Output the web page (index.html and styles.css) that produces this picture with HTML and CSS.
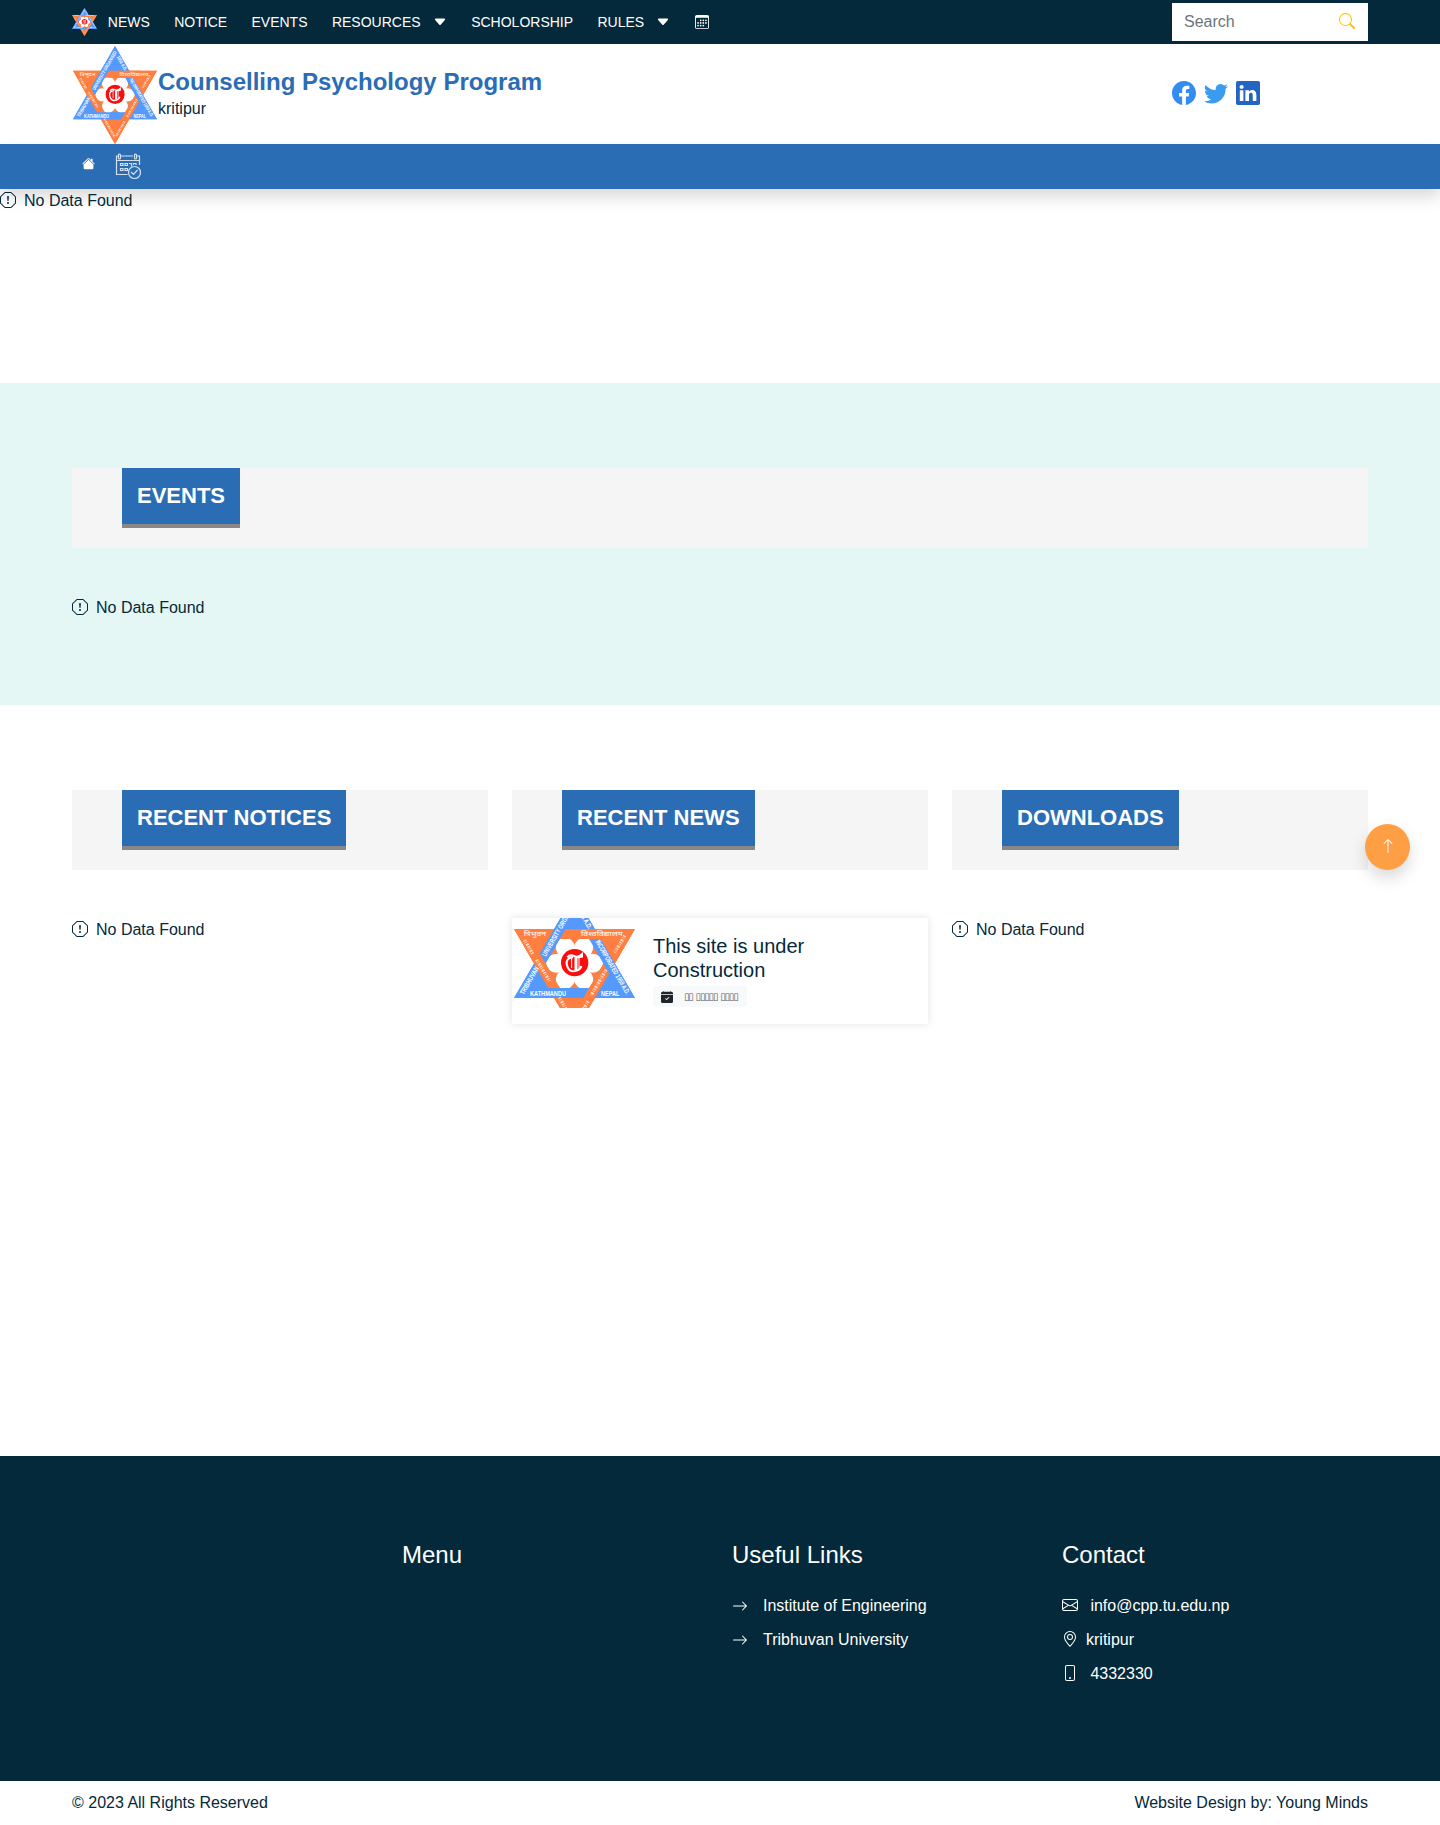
FILE: index.html
```html
<!DOCTYPE html>
<html lang="en">
<head>
<meta charset="utf-8">
<title>Counselling Psychology Program</title>
<link rel="stylesheet" href="styles.css">
</head>
<body>
<svg class="sprite" aria-hidden="true">
  <defs>
    <clipPath id="over">
      <rect x="195" y="95" width="100" height="55"/>
      <rect x="30" y="155" width="70" height="100"/>
      <rect x="195" y="270" width="80" height="55"/>
    </clipPath>
    <path id="edge-left" d="M29 303 L192 22"/>
    <path id="edge-right" d="M177 28 L344 316"/>
    <symbol id="logo" viewBox="0 0 363 417" preserveAspectRatio="none">
      <path d="M0 105H363L181.500 417Z" fill="#ff7f41"/>
      <path d="M181.500 0L363 312H0Z" fill="#5599fd"/>
      <path d="M138 135H225L268 208 225 282H138L95 208Z" fill="#ff7f41"/>
      <g fill="#fff">
        <ellipse cx="235" cy="208" rx="32" ry="28.500"/>
        <ellipse cx="235" cy="208" rx="32" ry="28.500" transform="rotate(60 181.500 208)"/>
        <ellipse cx="235" cy="208" rx="32" ry="28.500" transform="rotate(120 181.500 208)"/>
        <ellipse cx="235" cy="208" rx="32" ry="28.500" transform="rotate(180 181.500 208)"/>
        <ellipse cx="235" cy="208" rx="32" ry="28.500" transform="rotate(240 181.500 208)"/>
        <ellipse cx="235" cy="208" rx="32" ry="28.500" transform="rotate(300 181.500 208)"/>
        <circle cx="182" cy="207" r="50"/>
      </g>
      <path id="orange-band" fill="#ff7f41" fill-rule="evenodd" d="M0 105H363L181.500 417ZM52 135L181.500 357 311 135Z"/>
      <path fill="#5599fd" fill-rule="evenodd" d="M181.500 0L363 312H0ZM181.500 60L52 282H311Z"/>
      <use href="#orange-band" clip-path="url(#over)"/>
      <g class="logo-text">
        <text><textPath href="#edge-left" textLength="92" lengthAdjust="spacingAndGlyphs">TRIBHUVAN</textPath></text>
        <text><textPath href="#edge-left" startOffset="132" textLength="188" lengthAdjust="spacingAndGlyphs">UNIVERSITY ORGANISED</textPath></text>
        <text><textPath href="#edge-right" startOffset="22" textLength="70" lengthAdjust="spacingAndGlyphs">1958 A.D.</textPath></text>
        <text><textPath href="#edge-right" startOffset="133" textLength="185" lengthAdjust="spacingAndGlyphs">INCORPORATED 1959 A.D.</textPath></text>
        <text x="48" y="305" textLength="108" lengthAdjust="spacingAndGlyphs">KATHMANDU</text>
        <text x="261" y="305" textLength="55" lengthAdjust="spacingAndGlyphs">NEPAL</text>
      </g>
      <g class="logo-script">
        <text x="29" y="126" textLength="67" lengthAdjust="spacingAndGlyphs">त्रिभुवन</text>
        <text x="201" y="126" textLength="125" lengthAdjust="spacingAndGlyphs">विश्वविद्यालय</text>
      </g>
      <path fill="none" stroke="#fff" stroke-opacity=".7" stroke-width="10" stroke-dasharray="4 3 2 4 6 3" d="M32 138L57 182M68 197L107 262M136 310L180 388M332 125L302 176M276 227L232 304M222 322L186 384"/>
      <circle cx="182" cy="206" r="41" fill="#f90d0d"/>
      <g fill="none" stroke="#fff" stroke-width="6">
        <path d="M160 190q8-10 20-4t24-5v7q-12 4-20 0M177 189q-26 5-17 28q7 20 28 13q12-4 14-14"/>
        <path stroke-width="9" d="M186 190V228"/>
        <path stroke-width="3" d="M173 192V222M195 190V224"/>
      </g>
    </symbol>
    <symbol id="octagon" viewBox="0 0 16 16">
      <path d="M4.540.146A.5.5 0 0 1 4.893 0h6.214a.5.5 0 0 1 .353.146l4.394 4.394a.5.5 0 0 1 .146.353v6.214a.5.5 0 0 1-.146.353l-4.394 4.394a.5.5 0 0 1-.353.146H4.893a.5.5 0 0 1-.353-.146L.146 11.460A.5.5 0 0 1 0 11.107V4.893a.5.5 0 0 1 .146-.353L4.540.146zM5.100 1 1 5.100v5.800L5.100 15h5.800l4.100-4.100V5.100L10.900 1H5.100z"/>
      <path d="M7.002 11a1 1 0 1 1 2 0 1 1 0 0 1-2 0zM7.100 4.995a.905.905 0 1 1 1.800 0l-.35 3.507a.552.552 0 0 1-1.100 0L7.100 4.995z"/>
    </symbol>
    <symbol id="caret" viewBox="0 0 16 16">
      <path d="M7.247 11.140 2.451 5.658C1.885 5.013 2.345 4 3.204 4h9.592a1 1 0 0 1 .753 1.659l-4.796 5.480a1 1 0 0 1-1.506 0z"/>
    </symbol>
    <symbol id="arrow" viewBox="0 0 16 16">
      <path fill-rule="evenodd" d="M1 8a.5.5 0 0 1 .5-.5h11.793l-3.147-3.146a.5.5 0 0 1 .708-.708l4 4a.5.5 0 0 1 0 .708l-4 4a.5.5 0 0 1-.708-.708L13.293 8.500H1.500A.5.5 0 0 1 1 8z"/>
    </symbol>
  </defs>
</svg>

<header>
  <div class="topbar">
    <div class="container topbar-inner">
      <nav class="topnav">
        <svg class="logo-small"><use href="#logo"/></svg>
        <a class="first">NEWS</a>
        <a>NOTICE</a>
        <a>EVENTS</a>
        <a>RESOURCES<svg class="caret"><use href="#caret"/></svg></a>
        <a>SCHOLORSHIP</a>
        <a>RULES<svg class="caret"><use href="#caret"/></svg></a>
        <a><svg class="cal" viewBox="0 0 16 16"><path d="M14 0H2a2 2 0 0 0-2 2v12a2 2 0 0 0 2 2h12a2 2 0 0 0 2-2V2a2 2 0 0 0-2-2zM1 3.857C1 3.384 1.448 3 2 3h12c.552 0 1 .384 1 .857v10.286c0 .473-.448.857-1 .857H2c-.552 0-1-.384-1-.857V3.857z"/><path d="M6.500 7a1 1 0 1 0 0-2 1 1 0 0 0 0 2zm3 0a1 1 0 1 0 0-2 1 1 0 0 0 0 2zm3 0a1 1 0 1 0 0-2 1 1 0 0 0 0 2zm-9 3a1 1 0 1 0 0-2 1 1 0 0 0 0 2zm3 0a1 1 0 1 0 0-2 1 1 0 0 0 0 2zm3 0a1 1 0 1 0 0-2 1 1 0 0 0 0 2zm3 0a1 1 0 1 0 0-2 1 1 0 0 0 0 2zm-9 3a1 1 0 1 0 0-2 1 1 0 0 0 0 2zm3 0a1 1 0 1 0 0-2 1 1 0 0 0 0 2zm3 0a1 1 0 1 0 0-2 1 1 0 0 0 0 2z"/></svg></a>
      </nav>
      <form class="search">
        <input type="text" placeholder="Search" aria-label="Search">
        <svg viewBox="0 0 16 16"><path d="M11.742 10.344a6.500 6.500 0 1 0-1.397 1.398h-.001c.03.040.062.078.098.115l3.850 3.850a1 1 0 0 0 1.415-1.414l-3.850-3.850a1.007 1.007 0 0 0-.115-.1zM12 6.500a5.500 5.500 0 1 1-11 0 5.500 5.500 0 0 1 11 0z"/></svg>
      </form>
    </div>
  </div>
  <div class="container brand">
    <svg class="logo-main"><use href="#logo"/></svg>
    <div class="brand-text">
      <h1>Counselling Psychology Program</h1>
      <p>kritipur</p>
    </div>
    <div class="social">
      <svg class="facebook" viewBox="0 0 16 16"><path d="M16 8.049c0-4.446-3.582-8.050-8-8.050C3.580 0-.002 3.603-.002 8.050c0 4.017 2.926 7.347 6.750 7.951v-5.625h-2.030V8.050H6.750V6.275c0-2.017 1.195-3.131 3.022-3.131.876 0 1.791.157 1.791.157v1.980h-1.009c-.993 0-1.303.621-1.303 1.258v1.510h2.218l-.354 2.326H9.250V16c3.824-.604 6.750-3.934 6.750-7.951z"/></svg>
      <svg class="twitter" viewBox="0 0 16 16"><path d="M5.026 15c6.038 0 9.341-5.003 9.341-9.334 0-.140 0-.282-.006-.422A6.685 6.685 0 0 0 16 3.542a6.658 6.658 0 0 1-1.889.518 3.301 3.301 0 0 0 1.447-1.817 6.533 6.533 0 0 1-2.087.793A3.286 3.286 0 0 0 7.875 6.030a9.325 9.325 0 0 1-6.767-3.429 3.289 3.289 0 0 0 1.018 4.382A3.323 3.323 0 0 1 .640 6.575v.045a3.288 3.288 0 0 0 2.632 3.218 3.203 3.203 0 0 1-.865.115 3.230 3.230 0 0 1-.614-.057 3.283 3.283 0 0 0 3.067 2.277A6.588 6.588 0 0 1 .780 13.580a6.320 6.320 0 0 1-.780-.045A9.344 9.344 0 0 0 5.026 15z"/></svg>
      <svg class="linkedin" viewBox="0 0 16 16"><path d="M0 1.146C0 .513.526 0 1.175 0h13.650C15.474 0 16 .513 16 1.146v13.708c0 .633-.526 1.146-1.175 1.146H1.175C.526 16 0 15.487 0 14.854V1.146zm4.943 12.248V6.169H2.542v7.225h2.401zm-1.200-8.212c.837 0 1.358-.554 1.358-1.248-.015-.709-.520-1.248-1.342-1.248-.822 0-1.359.540-1.359 1.248 0 .694.521 1.248 1.327 1.248h.016zm4.908 8.212V9.359c0-.216.016-.432.080-.586.173-.431.568-.878 1.232-.878.869 0 1.216.662 1.216 1.634v3.865h2.401V9.250c0-2.220-1.184-3.252-2.764-3.252-1.274 0-1.845.700-2.165 1.193v.025h-.016a5.540 5.540 0 0 1 .016-.025V6.169h-2.400c.030.678 0 7.225 0 7.225h2.400z"/></svg>
    </div>
  </div>
  <nav class="mainnav">
    <div class="container mainnav-inner">
      <svg class="home" viewBox="0 0 16 16"><path d="M8.707 1.500a1 1 0 0 0-1.414 0L.646 8.146a.5.5 0 0 0 .708.708L8 2.207l6.646 6.647a.5.5 0 0 0 .708-.708L13 5.793V2.500a.5.5 0 0 0-.5-.5h-1a.5.5 0 0 0-.5.5v1.293L8.707 1.500Z"/><path d="m8 3.293 6 6V13.500a1.500 1.500 0 0 1-1.500 1.500h-9A1.500 1.500 0 0 1 2 13.500V9.293l6-6Z"/></svg>
      <svg class="schedule" viewBox="0 0 26 26"><path d="M3 3H1.500V21.500H12.500M1.500 7.500H24M5.500 3H18M21 3H24.500V12M5.500 10.500H8V12.500H5.500ZM10 10.500H12.500V12.500H10ZM5.500 15.500H8V17.500H5.500ZM10 15.500H12.500V17.500H10ZM14 10.500H16.500V13.500M21 12V10.500H18.500V12M16 19L18.500 21.500 22.500 17"/><rect x="3.500" y="1" width="2" height="5" rx="1"/><rect x="19.500" y="1" width="2" height="5" rx="1"/><circle cx="19.500" cy="19.500" r="6"/></svg>
    </div>
  </nav>
</header>

<main>
  <div class="hero">
    <p class="nodata"><svg><use href="#octagon"/></svg>No Data Found</p>
  </div>
  <section class="events">
    <div class="container">
      <div class="heading"><h2>EVENTS</h2></div>
      <p class="nodata"><svg><use href="#octagon"/></svg>No Data Found</p>
    </div>
  </section>
  <section class="container columns">
    <div>
      <div class="heading"><h2>RECENT NOTICES</h2></div>
      <p class="nodata"><svg><use href="#octagon"/></svg>No Data Found</p>
    </div>
    <div>
      <div class="heading"><h2>RECENT NEWS</h2></div>
      <article class="card">
        <div class="thumb"><svg><use href="#logo"/></svg></div>
        <div class="card-body">
          <h3>This site is under Construction</h3>
          <span class="date"><svg viewBox="0 0 16 16"><path d="M4 .5a.5.5 0 0 0-1 0V1H2a2 2 0 0 0-2 2v1h16V3a2 2 0 0 0-2-2h-1V.5a.5.5 0 0 0-1 0V1H4V.5zM16 14V5H0v9a2 2 0 0 0 2 2h12a2 2 0 0 0 2-2zm-5.146-5.146-3 3a.5.5 0 0 1-.708 0l-1.500-1.500a.5.5 0 0 1 .708-.708L7.500 10.793l2.646-2.647a.5.5 0 0 1 .708.708z"/></svg><span class="date-text">▯▯ ▯▯▯▯▯ ▯▯▯▯</span></span>
        </div>
      </article>
    </div>
    <div>
      <div class="heading"><h2>DOWNLOADS</h2></div>
      <p class="nodata"><svg><use href="#octagon"/></svg>No Data Found</p>
    </div>
  </section>
</main>

<a class="to-top"><svg viewBox="0 0 16 16"><path fill-rule="evenodd" d="M8 15a.5.5 0 0 0 .5-.5V2.707l3.146 3.147a.5.5 0 0 0 .708-.708l-4-4a.5.5 0 0 0-.708 0l-4 4a.5.5 0 1 0 .708.708L7.500 2.707V14.500a.5.5 0 0 0 .5.5z"/></svg></a>

<footer>
  <div class="footer-main">
    <div class="container footer-grid">
      <div></div>
      <div><h4>Menu</h4></div>
      <div>
        <h4>Useful Links</h4>
        <ul>
          <li class="link"><svg><use href="#arrow"/></svg>Institute of Engineering</li>
          <li class="link"><svg><use href="#arrow"/></svg>Tribhuvan University</li>
        </ul>
      </div>
      <div>
        <h4>Contact</h4>
        <ul>
          <li><svg viewBox="0 0 16 16"><path d="M0 4a2 2 0 0 1 2-2h12a2 2 0 0 1 2 2v8a2 2 0 0 1-2 2H2a2 2 0 0 1-2-2V4Zm2-1a1 1 0 0 0-1 1v.217l7 4.200 7-4.200V4a1 1 0 0 0-1-1H2Zm13 2.383-4.708 2.825L15 11.105V5.383Zm-.034 6.876-5.640-3.471L8 9.583l-1.326-.795-5.640 3.470A1 1 0 0 0 2 13h12a1 1 0 0 0 .966-.741ZM1 11.105l4.708-2.897L1 5.383v5.722Z"/></svg>info@cpp.tu.edu.np</li>
          <li class="place"><svg viewBox="0 0 16 16"><path d="M12.166 8.940c-.524 1.062-1.234 2.120-1.960 3.070A31.493 31.493 0 0 1 8 14.580a31.481 31.481 0 0 1-2.206-2.570c-.726-.950-1.436-2.008-1.960-3.070C3.304 7.867 3 6.862 3 6a5 5 0 0 1 10 0c0 .862-.305 1.867-.834 2.940zM8 16s6-5.686 6-10A6 6 0 0 0 2 6c0 4.314 6 10 6 10z"/><path d="M8 8a2 2 0 1 1 0-4 2 2 0 0 1 0 4zm0 1a3 3 0 1 0 0-6 3 3 0 0 0 0 6z"/></svg>kritipur</li>
          <li><svg viewBox="0 0 16 16"><path d="M11 1a1 1 0 0 1 1 1v12a1 1 0 0 1-1 1H5a1 1 0 0 1-1-1V2a1 1 0 0 1 1-1h6zM5 0a2 2 0 0 0-2 2v12a2 2 0 0 0 2 2h6a2 2 0 0 0 2-2V2a2 2 0 0 0-2-2H5z"/><path d="M8 14a1 1 0 1 0 0-2 1 1 0 0 0 0 2z"/></svg>4332330</li>
        </ul>
      </div>
    </div>
  </div>
  <div class="container copyright">
    <span>© 2023 All Rights Reserved</span>
    <span>Website Design by: Young Minds</span>
  </div>
</footer>
</body>
</html>
```
FILE: styles.css
```css
* { box-sizing: border-box; }
body {
  margin: 0;
  font: 16px/24px "Liberation Sans", Arial, sans-serif;
  color: #04293a;
  background: #fff;
}
h1, h2, h3, h4, p, ul { margin: 0; padding: 0; }
ul { list-style: none; }
svg { display: block; fill: currentColor; flex: none; }
.sprite { position: absolute; width: 0; height: 0; }
.container { width: 1296px; margin: 0 auto; }
.logo-text { fill: #fff; font-family: "Liberation Sans", Arial, sans-serif; font-size: 21px; font-weight: 700; }
.logo-script { fill: #fff; font-family: "Noto Sans", sans-serif; font-size: 17px; }

.topbar { height: 44px; background: #04293a; color: #fff; }
.topbar-inner { display: flex; justify-content: space-between; align-items: center; height: 44px; }
.topnav { display: flex; align-items: center; font-size: 14px; }
.topnav a { display: flex; align-items: center; margin-left: 24.400px; }
.topnav .first { margin-left: 10.800px; }
.logo-small { width: 25px; height: 28px; }
.caret { width: 14px; height: 14px; margin-left: 12.200px; }
.cal { width: 14px; height: 14px; }
.search { display: flex; align-items: center; width: 196px; height: 38px; padding: 0 13px 0 12px; background: #fff; }
.search input { flex: 1; min-width: 0; padding: 0; border: 0; outline: 0; font: inherit; }
.search input::placeholder { color: #6c757d; opacity: 1; }
.search svg { width: 16px; height: 16px; margin-bottom: 2px; fill: #ffc107; }

.brand { display: flex; align-items: center; height: 100px; }
.logo-main { width: 84px; height: 98px; margin: 1px 1px 0; }
.brand-text { flex: 1; }
.brand h1 { margin-bottom: 1px; font-size: 24px; line-height: 29px; color: #2a6db5; }
.social { display: flex; gap: 8px; width: 196px; padding-bottom: 2px; }
.social svg { width: 24px; height: 24px; }
.facebook { fill: #338cf2; }
.twitter { fill: #3a9bf0; }
.linkedin { fill: #2464c2; }

.mainnav { position: relative; height: 45px; background: #2a6db5; color: #fff; box-shadow: 0 8px 16px rgba(0, 0, 0, .15); }
.mainnav-inner { display: flex; padding: 9px 0 0 10px; }
.home { width: 13px; height: 13px; margin-top: 4px; }
.schedule { width: 26px; height: 26px; margin-left: 20px; fill: none; stroke: #d3e1f0; stroke-width: 1.2; }

.nodata { display: flex; align-items: center; gap: 8px; }
.nodata svg { width: 16px; height: 16px; margin-bottom: 2px; }
.hero { position: relative; height: 194px; }
.events { height: 322px; padding-top: 85px; background: #e4f7f5; }
.heading { height: 80px; margin-bottom: 48px; padding-left: 50px; background: #f5f5f5; }
.heading h2 { display: inline-block; height: 60px; padding: 15px 15px 0; font-size: 22px; line-height: 26px; color: #fff; background: #2a6db5; border-bottom: 4px solid #888; }
.columns { display: grid; grid-template-columns: repeat(3, 1fr); gap: 24px; height: 751px; padding-top: 85px; }

.card { display: flex; height: 106px; background: #fff; box-shadow: 0 0 8px rgba(4, 41, 58, .12); }
.thumb { display: flex; align-items: center; justify-content: center; width: 125px; height: 90px; overflow: hidden; }
.thumb svg { width: 121px; height: 139px; }
.card-body { flex: 1; padding: 16px 16px 0; }
.card h3 { width: 200px; font-size: 20px; font-weight: 400; line-height: 24px; }
.date { display: inline-flex; align-items: center; gap: 11px; width: 94px; height: 21px; margin-top: 4px; padding: 0 8px; border-radius: 4px; background: #f8f9fa; color: #212529; }
.date svg { width: 12px; height: 12px; }
.date-text { padding-top: 1px; font: 10px/12px "DejaVu Sans", sans-serif; letter-spacing: -1.150px; word-spacing: .8px; white-space: nowrap; opacity: .75; }

.to-top { position: fixed; top: 824px; right: 30px; display: flex; align-items: center; justify-content: center; width: 45px; height: 46px; padding-left: 1px; border-radius: 50%; background: #ff9f45; color: #fff; box-shadow: 0 8px 16px rgba(0, 0, 0, .15); }
.to-top svg { width: 16px; height: 16px; margin-bottom: 2px; }

.footer-main { height: 325px; padding-top: 84px; background: #04293a; color: #fff; }
.footer-grid { display: grid; grid-template-columns: repeat(4, 1fr); column-gap: 24px; }
.footer-main h4 { margin-bottom: 25px; font-size: 24px; font-weight: 400; line-height: 29px; }
.footer-main li { display: flex; align-items: center; gap: 12.400px; height: 24px; margin-bottom: 10px; }
.footer-main li svg { width: 16px; height: 16px; margin-bottom: 2px; }
.footer-main .link { gap: 15px; }
.footer-main .link svg { margin-bottom: 1px; }
.footer-main .place { gap: 8px; }
.copyright { display: flex; justify-content: space-between; height: 44px; padding-top: 10px; }
```
